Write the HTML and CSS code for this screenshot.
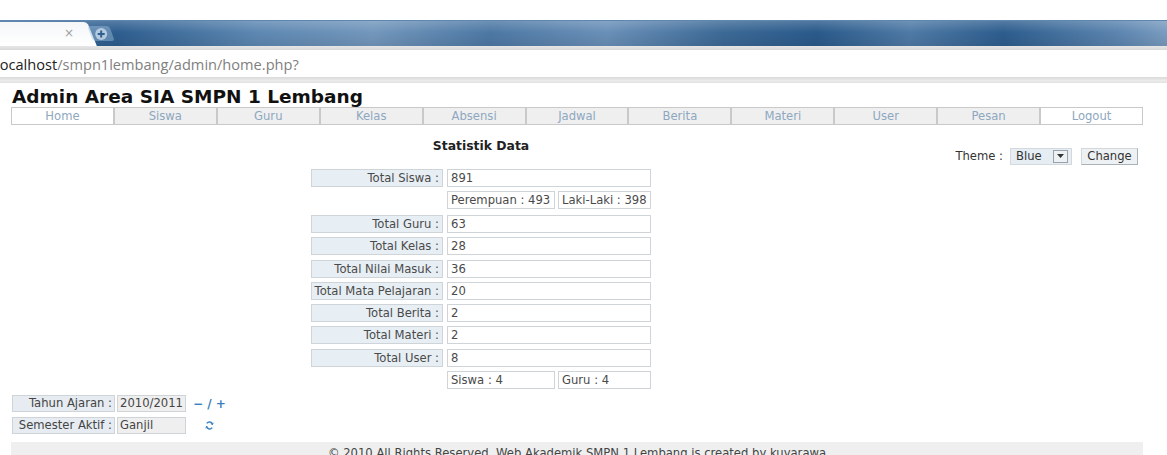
FILE: index.html
```html
<!DOCTYPE html>
<html>
<head>
<meta charset="utf-8">
<title>Admin Area SIA SMPN 1 Lembang</title>
<link rel="stylesheet" href="styles.css">
</head>
<body>
<div class="chrome">
  <div class="topstrip"></div>
  <div class="tabbar">
    <div class="tab"><span class="tab-close">×</span></div>
    <div class="newtab">
      <svg width="14" height="14" viewBox="0 0 14 14"><circle cx="7" cy="7" r="6" fill="#c9d9ea" opacity="0.8"/><path d="M7 3.5v7M3.5 7h7" stroke="#2f5f90" stroke-width="2"/></svg>
    </div>
  </div>
  <div class="sep1"></div>
  <div class="addr"><span class="host">localhost</span><span class="path">/smpn1lembang/admin/home.php?</span></div>
  <div class="sep2"></div>
</div>

<div class="page">
  <h1 class="title">Admin Area SIA SMPN 1 Lembang</h1>
  <nav class="menu">
    <a class="menu-item active">Home</a>
    <a class="menu-item">Siswa</a>
    <a class="menu-item">Guru</a>
    <a class="menu-item">Kelas</a>
    <a class="menu-item">Absensi</a>
    <a class="menu-item">Jadwal</a>
    <a class="menu-item">Berita</a>
    <a class="menu-item">Materi</a>
    <a class="menu-item">User</a>
    <a class="menu-item">Pesan</a>
    <a class="menu-item active">Logout</a>
  </nav>

  <div class="main">
    <div class="content">
      <h2 class="heading">Statistik Data</h2>
      <div class="stats">
        <div class="lbl">Total Siswa :</div><div class="val">891</div>
        <div></div>
        <div class="sub"><div class="val w1">Perempuan : 493</div><div class="val w2">Laki-Laki : 398</div></div>
      </div>
      <div class="stats second">
        <div class="lbl">Total Guru :</div><div class="val">63</div>
        <div class="lbl">Total Kelas :</div><div class="val">28</div>
        <div class="lbl">Total Nilai Masuk :</div><div class="val">36</div>
        <div class="lbl">Total Mata Pelajaran :</div><div class="val">20</div>
        <div class="lbl">Total Berita :</div><div class="val">2</div>
        <div class="lbl">Total Materi :</div><div class="val">2</div>
        <div class="lbl">Total User :</div><div class="val">8</div>
        <div></div>
        <div class="sub"><div class="val w1">Siswa : 4</div><div class="val w2">Guru : 4</div></div>
      </div>
    </div>
    <div class="theme">
      <span class="theme-label">Theme :</span>
      <span class="select">Blue<span class="drop"><svg width="7" height="4" viewBox="0 0 7 4"><path d="M0 0h7L3.5 4z" fill="#333"/></svg></span></span>
      <span class="btn">Change</span>
    </div>
  </div>

  <div class="year">
    <div class="yrow">
      <div class="ylbl">Tahun Ajaran :</div><div class="yval">2010/2011</div>
      <span class="ctrl">&minus; / +</span>
    </div>
    <div class="yrow">
      <div class="ylbl">Semester Aktif :</div><div class="yval">Ganjil</div>
      <span class="refresh"><svg width="9" height="9" viewBox="0 0 10 10"><path d="M8.3 3.6A3.6 3.6 0 0 0 2 2.6" fill="none" stroke="#3d86c6" stroke-width="1.6"/><path d="M9.6 1.6 8.6 4.6 6 3z" fill="#3d86c6"/><path d="M1.7 6.4A3.6 3.6 0 0 0 8 7.4" fill="none" stroke="#3d86c6" stroke-width="1.6"/><path d="M0.4 8.4 1.4 5.4 4 7z" fill="#3d86c6"/></svg></span>
    </div>
  </div>

  <footer class="footer">© 2010 All Rights Reserved. Web Akademik SMPN 1 Lembang is created by kuyarawa</footer>
</div>
</body>
</html>
```

FILE: styles.css
```css
html, body {
  margin: 0;
  padding: 0;
  background: #ffffff;
  overflow: hidden;
}
body {
  font-family: "DejaVu Sans", Verdana, sans-serif;
  font-size: 11.6px;
  color: #444;
}

/* browser chrome */
.chrome { width: 100%; }
.topstrip { height: 20px; background: #ffffff; }
.tabbar {
  height: 26px;
  display: flex;
  align-items: flex-end;
  background:
    linear-gradient(to bottom, rgba(255,255,255,0.18), rgba(255,255,255,0) 45%, rgba(0,0,0,0.08)),
    linear-gradient(to right, #3f6f9f 0%, #2e5e8f 10%, #5e88b2 22%, #7397bc 32%, #4d78a4 42%, #6a90b8 52%, #3c6996 62%, #2a5a8b 70%, #4f7aa6 78%, #2d5d8e 86%, #5d86b0 96%, #7a9cc0 100%);
  border-top: 1px solid #5f86ad;
  box-sizing: border-box;
}
.tab {
  position: relative;
  width: 84px;
  height: 24px;
  background: linear-gradient(to bottom, #f4f6f8, #ffffff);
  border-top-right-radius: 6px;
  display: flex;
  align-items: center;
  justify-content: flex-end;
}
.tab::after {
  content: "";
  position: absolute;
  right: -8px;
  top: 0;
  width: 16px;
  height: 24px;
  background: linear-gradient(to bottom, #f4f6f8, #ffffff);
  transform: skewX(22deg);
  border-top-right-radius: 4px;
}
.tab-close {
  position: relative;
  z-index: 1;
  color: #a0a0a0;
  font-family: "DejaVu Sans", sans-serif;
  font-size: 12px;
  margin-right: 10px;
  margin-bottom: 2px;
}
.newtab {
  margin-left: 6px;
  margin-bottom: 5px;
  width: 22px;
  height: 15px;
  display: flex;
  align-items: center;
  justify-content: center;
  background: rgba(160,190,220,0.45);
  border-radius: 3px;
  transform: skewX(20deg);
}
.newtab svg { transform: skewX(-20deg); }
.sep1 { height: 4px; background: linear-gradient(to bottom, #e6e6e6, #d8d8d8); }
.addr {
  height: 27px;
  background: #ffffff;
  display: flex;
  align-items: center;
  font-family: "Open Sans", "Noto Sans", sans-serif;
  font-size: 14.6px;
  white-space: nowrap;
  overflow: hidden;
}
.host { color: #222; margin-left: -4px; }
.path { color: #808080; }
.sep2 { height: 6px; background: linear-gradient(to bottom, #d9d9d9, #ebebeb 60%, #e2e2e2); }

/* page */
.page {
  padding: 0 24px 0 11px;
}
.title {
  margin: 0;
  padding-left: 1px;
  height: 24px;
  line-height: 27px;
  font-size: 18.5px;
  font-weight: bold;
  color: #111;
  white-space: nowrap;
}
.menu {
  display: flex;
}
.menu-item {
  flex: 1;
  height: 16px;
  line-height: 16px;
  border: 1px solid #c9c9c9;
  background: #efefef;
  color: #8ea7c0;
  text-align: center;
  font-size: 11.6px;
}
.menu-item.active { background: #ffffff; }

.main {
  display: flex;
}
.content {
  width: 940px;
  display: flex;
  flex-direction: column;
  align-items: center;
}
.heading {
  margin: 14px 0 16px 0;
  height: 14px;
  line-height: 14px;
  font-size: 12.4px;
  font-weight: bold;
  color: #222;
}
.stats {
  display: grid;
  grid-template-columns: 132px 204px;
  grid-auto-rows: 18px;
  column-gap: 4px;
  row-gap: 4px;
}
.stats.second {
  margin-top: 6px;
  row-gap: 4.3px;
}
.lbl, .val {
  box-sizing: border-box;
  height: 18px;
  line-height: 16px;
  border: 1px solid #cfd4d9;
  white-space: nowrap;
  font-size: 11.6px;
  color: #4a4a4a;
}
.lbl {
  background: #e7eef4;
  text-align: right;
  padding-right: 3px;
}
.val {
  background: #ffffff;
  padding-left: 3px;
}
.sub {
  display: flex;
  gap: 3px;
}
.w1 { width: 108px; }
.w2 { width: 93px; }

.theme {
  flex: 1;
  display: flex;
  justify-content: flex-end;
  align-items: center;
  margin-top: 23px;
  height: 16px;
  padding-right: 5px;
  gap: 0;
}
.theme-label {
  color: #333;
  margin-right: 7px;
}
.select {
  box-sizing: border-box;
  width: 62px;
  height: 17px;
  line-height: 15px;
  background: #e6edf3;
  border: 1px solid #d3d9df;
  padding-left: 5px;
  color: #333;
  display: flex;
  align-items: center;
  justify-content: space-between;
  padding-right: 3px;
}
.drop {
  box-sizing: border-box;
  width: 15px;
  height: 13px;
  border: 1px solid #9aa3ab;
  background: #eef1f4;
  display: flex;
  align-items: center;
  justify-content: center;
}
.btn {
  box-sizing: border-box;
  margin-left: 9px;
  width: 57px;
  height: 17px;
  line-height: 15px;
  text-align: center;
  background: #eef1f4;
  border: 1px solid #d3d8dd;
  border-right-color: #aab2ba;
  border-bottom-color: #aab2ba;
  color: #333;
}

.year {
  margin-top: 6px;
  margin-left: 1px;
  display: flex;
  flex-direction: column;
  gap: 5px;
}
.yrow {
  display: flex;
  align-items: center;
  gap: 2px;
}
.ylbl, .yval {
  box-sizing: border-box;
  height: 17px;
  line-height: 15px;
  border: 1px solid #cfd4d9;
  font-size: 11.6px;
  color: #444;
  white-space: nowrap;
}
.ylbl {
  width: 103px;
  background: #e6ecf1;
  text-align: right;
  padding-right: 2px;
}
.yval {
  width: 69px;
  background: #efefef;
  padding-left: 2px;
}
.ctrl {
  margin-left: 5px;
  color: #3a7fc1;
  font-weight: bold;
  font-size: 12px;
}
.refresh {
  margin-left: 17px;
  display: flex;
  align-items: center;
}

.footer {
  margin-top: 8px;
  background: #efefef;
  height: 20px;
  padding-top: 4px;
  box-sizing: border-box;
  text-align: center;
  color: #444;
  font-size: 11.6px;
  line-height: 14px;
  white-space: nowrap;
}
```
